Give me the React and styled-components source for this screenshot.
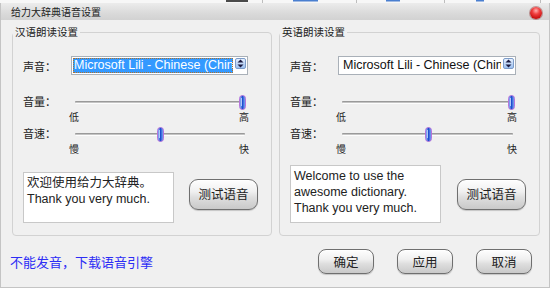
import React from "react";
import styled, { createGlobalStyle } from "styled-components";

const Global = createGlobalStyle`
  html, body { margin: 0; padding: 0; }
  body {
    width: 550px; height: 288px; overflow: hidden; background: #fff;
    font-family: "Liberation Sans", "Noto Sans CJK SC", sans-serif;
    color: #222;
  }
`;

const CJK = `"Noto Sans CJK SC", "Liberation Sans", sans-serif`;
const LATIN = `"Liberation Sans", "Noto Sans CJK SC", sans-serif`;

const Window = styled.div`
  width: 550px; height: 288px;
  display: flex; flex-direction: column;
  background: #f0f0f0;
`;

const BackStrip = styled.div`
  height: 3px; background: #f7f7f7; display: flex; overflow: hidden;
`;

const TitleBar = styled.div`
  height: 17px;
  display: flex; align-items: center; justify-content: space-between;
  padding: 0 7px 0 10px;
  background: linear-gradient(#ececec, #dadada 60%, #d2d2d2);
  border-left: 1px solid #c4c4c4; border-right: 1px solid #c4c4c4;
`;

const Title = styled.span`
  font-family: ${CJK}; font-size: 10px; line-height: 12px; color: #222;
`;

const CloseDot = styled.span`
  width: 12px; height: 12px; border-radius: 50%; margin-top: 2px;
  background: radial-gradient(circle at 50% 30%, #ffb0b0 0%, #f04040 35%, #c81010 75%, #8c0000 100%);
  box-shadow: 0 0 0 1px rgba(120,0,0,0.35);
`;

const Body = styled.div`
  flex: 1;
  display: flex; flex-direction: column;
  padding: 6px 9px 0 11px;
  border: 1px solid #c4c4c4; border-top: none;
`;

const Groups = styled.div`
  display: flex; gap: 7px;
`;

const Group = styled.fieldset`
  margin: 0; min-width: 0;
  width: ${(p) => p.$w}px;
  box-sizing: border-box;
  padding: 18px 23px 12px 10px;
  border: 1px solid #d2d2d2; border-radius: 4px;
  display: flex; flex-direction: column;
`;

const Legend = styled.legend`
  font-family: ${CJK}; font-size: 10.5px; line-height: 12px;
  padding: 0 2px; margin-left: -10px; color: #222;
`;

const Row = styled.div`
  display: grid; grid-template-columns: 48px 1fr; align-items: center;
  height: ${(p) => p.$h}px;
  margin-top: ${(p) => p.$mt || 0}px;
`;

const Label = styled.span`
  font-family: ${CJK}; font-size: 11px; line-height: 12px; color: #222;
  position: relative; top: ${(p) => (p.$raise ? -2 : 0)}px;
`;

const Combo = styled.div`
  height: 19px; box-sizing: border-box;
  border: 1px solid #a9b0b8; background: #fff;
  display: flex; align-items: stretch; gap: 2px; padding: 1px 1px 1px 1px;
  overflow: hidden;
`;

const ComboText = styled.span`
  flex: 1; min-width: 0; overflow: hidden; white-space: nowrap;
  font-family: ${LATIN}; font-size: 12.5px; line-height: 15px;
  padding: 0 0 0 ${(p) => (p.$selected ? 1 : 3)}px;
  background: ${(p) => (p.$selected ? "#3399ff" : "transparent")};
  color: ${(p) => (p.$selected ? "#fff" : "#111")};
  outline: ${(p) => (p.$selected ? "1px dotted #b0702a" : "none")};
  outline-offset: -1px;
`;

const ComboArrow = styled.span`
  width: 11px; height: 11px; flex: none; box-sizing: border-box;
  border: 1px solid #7d9cc8; border-radius: 2px;
  background: linear-gradient(#e6f0ff, #9cc0f0);
  display: flex; align-items: center; justify-content: center;
`;

const SliderBox = styled.div`
  position: relative; height: 17px;
  display: flex; align-items: center;
`;

const Track = styled.div`
  flex: 1; margin: 0 3px 0 4px; height: 1px;
  border-top: 1px solid #9a9a9a; border-bottom: 1px solid #fdfdfd;
  background: #c4c4c4; border-radius: 1px;
`;

const Thumb = styled.svg`
  position: absolute; top: 1px;
`;

const Ticks = styled.div`
  grid-column: 2;
  display: flex; justify-content: space-between;
  margin: 0 -1px 0 -2px;
  font-family: ${CJK}; font-size: 10px; line-height: 12px; color: #222;
`;

const BottomRow = styled.div`
  display: flex; align-items: center; gap: 15px;
  height: 58px; margin-top: 10px; margin-right: -10px;
`;

const TextBox = styled.div`
  width: 151px; height: ${(p) => p.$h}px; box-sizing: border-box;
  align-self: flex-end;
  background: #fff; border: 1px solid #c8c8c8;
  padding: 2px 3px;
  font-family: ${LATIN}; font-size: 12.5px; line-height: 16px; color: #222;
`;

const Button = styled.button`
  width: ${(p) => p.$w}px; height: ${(p) => p.$h}px;
  margin: 0; padding: 0; flex: none;
  border: 1px solid #6f6f6f; border-radius: ${(p) => p.$r}px;
  background: linear-gradient(#fefefe 0%, #f0f0f0 40%, #dedede 60%, #c9c9c9 100%);
  box-shadow: inset 0 1px 0 #fff, 0 1px 1px rgba(0,0,0,0.18);
  font-family: ${CJK}; font-size: 12.5px; line-height: 14px; color: #222;
  margin-left: ${(p) => (p.$push ? "auto" : "0")};
`;

const Footer = styled.div`
  display: flex; align-items: center; gap: 23px;
  height: 25px; margin-top: 13px; padding-right: 8px;
`;

const Link = styled.a`
  font-family: ${CJK}; font-size: 13px; line-height: 15px;
  color: #2d2df5; text-decoration: none; margin-left: -2px;
  margin-right: auto;
`;

function ThumbIcon({ left }) {
  return (
    <Thumb width="7" height="15" viewBox="0 0 7 15" style={{ left }}>
      <defs>
        <linearGradient id="tg" x1="0" y1="0" x2="1" y2="0">
          <stop offset="0" stopColor="#a9c8ff" />
          <stop offset="0.5" stopColor="#1d4fd0" />
          <stop offset="1" stopColor="#8fb4f8" />
        </linearGradient>
      </defs>
      <rect x="0.5" y="0.5" width="6" height="14" rx="3" fill="url(#tg)" stroke="#b46ad8" strokeWidth="0.9" />
      <rect x="2" y="3" width="1" height="8" fill="#dfe9ff" opacity="0.7" />
    </Thumb>
  );
}

function Slider({ value, width }) {
  const left = 4 + value * (width - 7 - 7);
  return (
    <SliderBox>
      <Track />
      <ThumbIcon left={left} />
    </SliderBox>
  );
}

function ComboIcon() {
  return (
    <svg width="7" height="9" viewBox="0 0 7 9">
      <path d="M3.5 0.5 L6.5 3.5 H0.5 Z" fill="#1a1a40" />
      <path d="M3.5 8.5 L6.5 5.5 H0.5 Z" fill="#1a1a40" />
    </svg>
  );
}

function VoiceGroup({ title, w, selected, sliderW, boxH, children }) {
  return (
    <Group $w={w}>
      <Legend>{title}</Legend>
      <Row $h={19}>
        <Label>声音：</Label>
        <Combo>
          <ComboText $selected={selected}>Microsoft Lili - Chinese (China)</ComboText>
          <ComboArrow><ComboIcon /></ComboArrow>
        </Combo>
      </Row>
      <Row $h={17} $mt={19}>
        <Label $raise>音量：</Label>
        <Slider value={1} width={sliderW} />
      </Row>
      <Row $h={12}>
        <Ticks><span>低</span><span>高</span></Ticks>
      </Row>
      <Row $h={17} $mt={3}>
        <Label $raise>音速：</Label>
        <Slider value={0.5} width={sliderW} />
      </Row>
      <Row $h={12}>
        <Ticks><span>慢</span><span>快</span></Ticks>
      </Row>
      <BottomRow>
        <TextBox $h={boxH}>{children}</TextBox>
        <Button $w={69} $h={31} $r={9} $push>测试语音</Button>
      </BottomRow>
    </Group>
  );
}

function Strip() {
  return (
    <svg width="550" height="3" viewBox="0 0 550 3">
      <rect x="226" y="0" width="22" height="2" fill="#4a4a4a" />
      <rect x="262" y="0" width="1" height="3" fill="#bdbdbd" />
      <rect x="293" y="0" width="25" height="1.5" fill="#4a7fd0" />
      <rect x="356" y="0" width="1" height="3" fill="#bdbdbd" />
      <rect x="386" y="0" width="14" height="1.5" fill="#4a7fd0" />
      <rect x="444" y="0" width="1" height="3" fill="#bdbdbd" />
      <rect x="476" y="0" width="8" height="1.5" fill="#4a7fd0" />
      <rect x="540" y="0" width="1" height="3" fill="#bdbdbd" />
    </svg>
  );
}

export default function App() {
  return (
    <>
      <Global />
      <Window>
        <BackStrip><Strip /></BackStrip>
        <TitleBar>
          <Title>给力大辞典语音设置</Title>
          <CloseDot />
        </TitleBar>
        <Body>
          <Groups>
            <VoiceGroup title="汉语朗读设置" w={260} selected sliderW={178} boxH={51}>
              欢迎使用给力大辞典。<br />Thank you very much.
            </VoiceGroup>
            <VoiceGroup title="英语朗读设置" w={261} sliderW={180} boxH={58}>
              Welcome to use the<br />awesome dictionary.<br />Thank you very much.
            </VoiceGroup>
          </Groups>
          <Footer>
            <Link href="#">不能发音，下载语音引擎</Link>
            <Button $w={56} $h={25} $r={8}>确定</Button>
            <Button $w={56} $h={25} $r={8}>应用</Button>
            <Button $w={56} $h={25} $r={8}>取消</Button>
          </Footer>
        </Body>
      </Window>
    </>
  );
}
